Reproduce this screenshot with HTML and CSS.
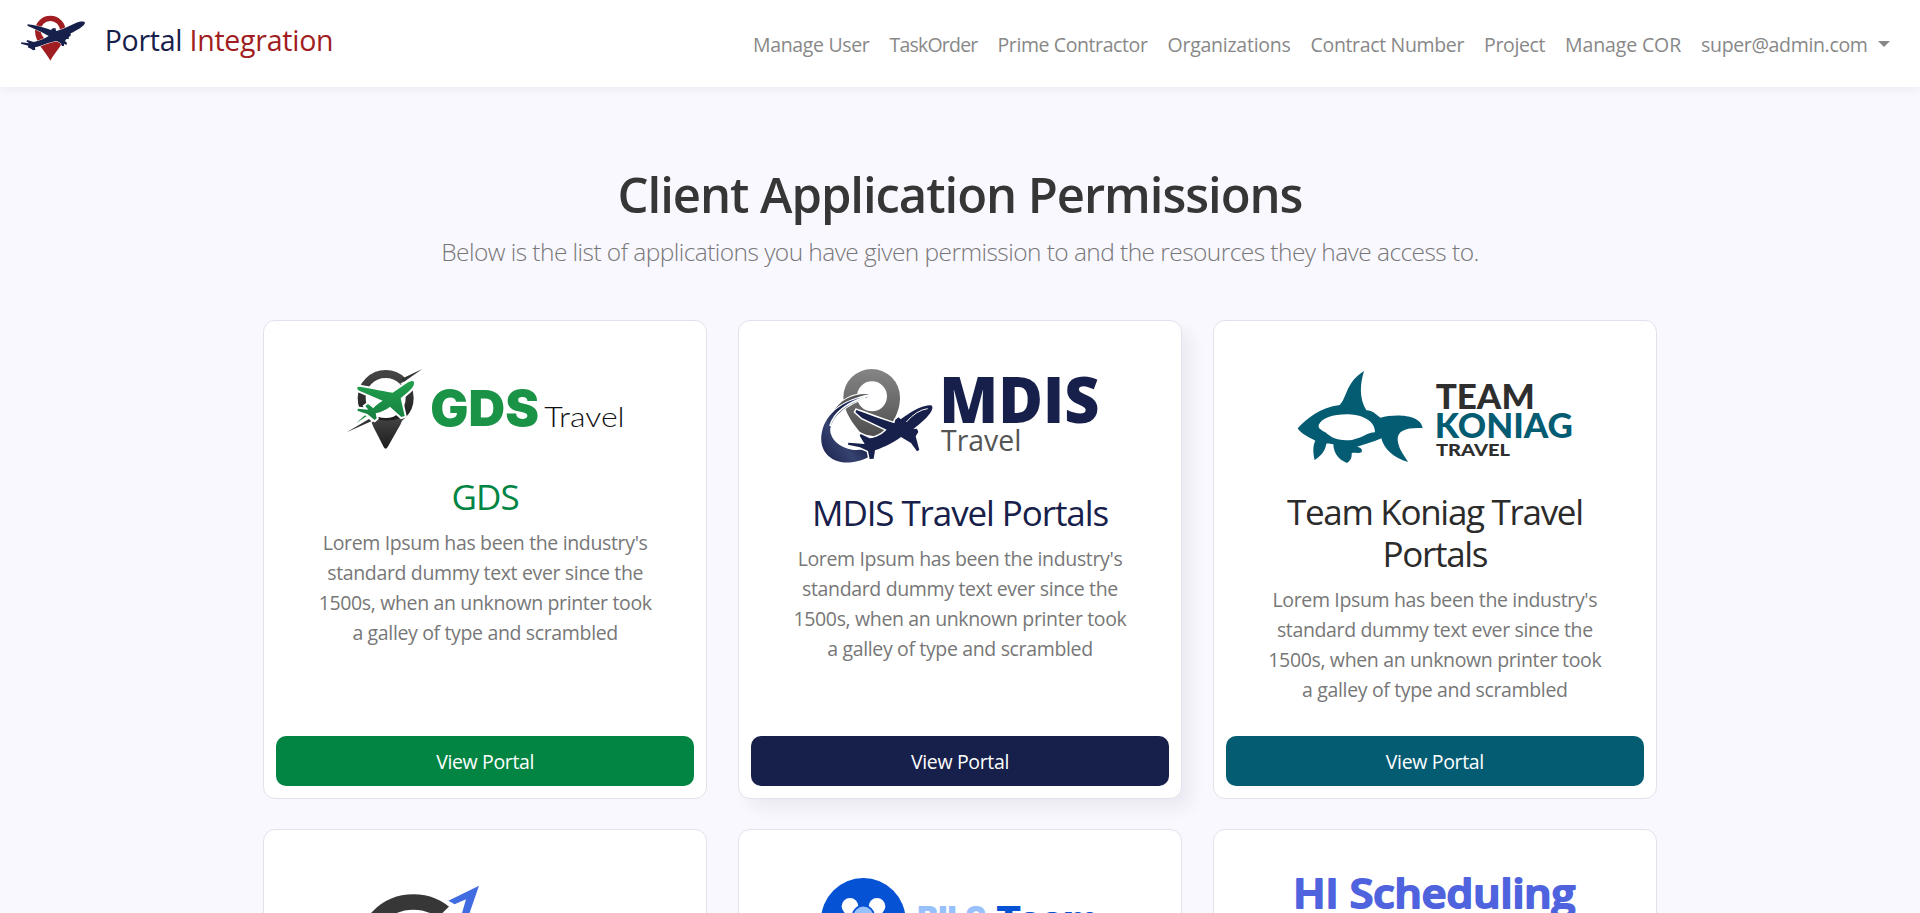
FILE: index.html
```html
<!DOCTYPE html>
<html lang="en">
<head>
<meta charset="utf-8">
<title>Portal Integration</title>
<link rel="stylesheet" href="styles.css">
</head>
<body>
<header class="navbar">
  <a class="brand">
    <svg class="brand-logo" viewBox="60 40 200 150">
      <path fill="#a01d21" fill-rule="evenodd" d="M151 183C140 160 105 130 105 94a46 46 0 0 1 92 0C197 130 162 160 151 183zM151 64a29 29 0 1 0 0 58a29 29 0 1 0 0-58z"/>
      <path fill="#17204a" stroke="#fff" stroke-width="3" paint-order="stroke" d="M255 69C253 63 240 65 229 69L190 87L177 92L168 94L167 86L158 86L153 91C130 83 103 76 83 74L82 78L124 97L146 109C133 118 116 124 101 127L82 121L79 125L87 131L64 128L63 132L85 138L83 143L93 147L99 152L106 150L105 143C124 140 146 126 171 124L181 130L186 139L192 139L192 132L199 136L201 130L195 124L198 119L207 117L206 112L212 108L212 101C231 91 253 80 255 69z"/>
    </svg>
    <span class="brand-name">Portal <span class="brand-accent">Integration</span></span>
  </a>
  <nav class="nav-links">
    <a class="nav-user">Manage User</a>
    <a class="nav-task">TaskOrder</a>
    <a class="nav-prime">Prime Contractor</a>
    <a class="nav-org">Organizations</a>
    <a class="nav-contract">Contract Number</a>
    <a class="nav-project">Project</a>
    <a class="nav-cor">Manage COR</a>
    <a class="nav-account">super@admin.com<span class="caret"></span></a>
  </nav>
</header>
<main>
  <h1 class="page-title">Client Application Permissions</h1>
  <p class="page-lead">Below is the list of applications you have given permission to and the resources they have access to.</p>
  <div class="cards">
    <article class="card card-gds">
      <div class="logo">
        <svg width="310" height="120" viewBox="0 0 930 360">
          <defs>
            <linearGradient id="ink" x1="0" y1="0" x2="0" y2="1"><stop offset="0" stop-color="#444"/><stop offset="1" stop-color="#1c1c1c"/></linearGradient>
            <linearGradient id="leaf" x1="0" y1="0" x2="0" y2="1"><stop offset="0" stop-color="#22a04d"/><stop offset="1" stop-color="#168040"/></linearGradient>
          </defs>
          <circle cx="167" cy="144" r="72" fill="none" stroke="url(#ink)" stroke-width="24"/>
          <path fill="url(#ink)" d="M118 201Q167 222 221 201L211 224L173 291Q167 301 161 291L130 230z"/>
          <path fill="#fff" d="M211 101L252 76L262 99L234 118zM72 192L110 190L137 211L110 226z"/>
          <path fill="#333" d="M277 57L212 88L222 95zM50 247L117 207L124 214z"/>
          <path fill="#1b8a44" d="M79 219L110 191L116 194z"/>
          <path fill="url(#leaf)" stroke="#fff" stroke-width="12" paint-order="stroke" d="M252 97C250 90 240 93 230 100L188 128C150 122 110 112 84 110C78 115 85 122 95 125L158 152C145 160 135 168 130 175L114 162L106 168L115 179L84 176L82 182L112 192L134 210L140 205L137 190C155 187 170 177 180 170L214 201L224 198L212 145C230 130 255 112 252 97z"/>
          <text class="gds-word" x="301" y="229" textLength="326" lengthAdjust="spacingAndGlyphs">GDS</text>
          <text class="gds-travel" x="643" y="230" textLength="241" lengthAdjust="spacingAndGlyphs">Travel</text>
        </svg>
      </div>
      <h2 class="card-title">GDS</h2>
      <p class="card-text">Lorem Ipsum has been the industry's standard dummy text ever since the 1500s, when an unknown printer took a galley of type and scrambled</p>
      <a class="btn">View Portal</a>
    </article>
    <article class="card card-mdis card-active">
      <div class="logo">
        <svg width="320" height="130" viewBox="0 0 960 390">
          <defs>
            <linearGradient id="steel" x1="0" y1="0" x2="0" y2="1"><stop offset="0" stop-color="#858585"/><stop offset="1" stop-color="#4d4d4d"/></linearGradient>
            <linearGradient id="swoosh" x1="0" y1="1" x2="1" y2="0"><stop offset="0" stop-color="#17204a"/><stop offset=".35" stop-color="#36426f"/><stop offset=".6" stop-color="#17204a"/><stop offset="1" stop-color="#3f64a8"/></linearGradient>
          </defs>
          <path fill="url(#steel)" fill-rule="evenodd" d="M130 142a85 85 0 0 1 170 0C300 195 272 217 258 265L185 252C160 222 132 190 130 142zM216 94a43 43 0 1 0 0 90a43 43 0 1 0 0-90z"/>
          <path fill="#555" stroke="#fff" stroke-width="5" paint-order="stroke" d="M208 132C160 129 120 148 99 187C128 157 165 142 208 132z"/>
          <path fill="url(#swoosh)" stroke="#fff" stroke-width="6" paint-order="stroke" d="M206 140C140 146 88 181 69 233C47 303 96 344 155 337C184 334 203 324 216 313L191 297C154 308 100 288 91 246C87 203 142 159 206 140z"/>
          <path fill="none" stroke="#fff" stroke-width="5" d="M196 142C143 157 100 188 90 228"/>
          <path fill="#17204a" stroke="#fff" stroke-width="9" paint-order="stroke" d="M396 167C374 159 325 190 302 208L296 202L286 209L283 220C242 208 205 192 169 180L166 186L186 204L260 239C248 252 230 262 209 265L182 252L179 257L194 282L145 278L144 284L180 292L204 303L209 327L221 326L225 301C257 290 285 274 303 261L333 279L351 304L358 300L347 259L355 246L351 236L337 237L333 242C350 229 406 188 396 167z"/>
          <path fill="none" stroke="#fff" stroke-width="3" d="M319 216Q350 180 383 176"/>
          <text class="mdis-word" x="418" y="218" textLength="480" lengthAdjust="spacingAndGlyphs">MDIS</text>
          <text class="mdis-travel" x="423" y="302" textLength="241" lengthAdjust="spacingAndGlyphs">Travel</text>
        </svg>
      </div>
      <h2 class="card-title">MDIS Travel Portals</h2>
      <p class="card-text">Lorem Ipsum has been the industry's standard dummy text ever since the 1500s, when an unknown printer took a galley of type and scrambled</p>
      <a class="btn">View Portal</a>
    </article>
    <article class="card card-koniag">
      <div class="logo">
        <svg width="320" height="130" viewBox="-16 0 960 390">
          <path fill="#045c73" fill-rule="evenodd" d="M52 235C80 205 120 172 178 165C200 144 196 97 251 63C240 100 235 142 258 181C275 180 285 192 300 203C340 192 420 190 427 234C380 232 350 240 352 270C355 300 375 320 383 336C340 325 310 295 303 265C280 275 255 283 230 290C240 292 247 296 244 306C235 312 222 306 214 310C215 325 208 335 200 339C175 330 160 310 159 283C150 282 145 280 138 281C135 305 118 320 103 330C97 305 98 285 105 272C85 262 60 250 52 235zM115 225C125 203 160 192 205 193C250 195 285 215 284 247C260 248 250 262 215 270C170 275 150 260 135 247C122 240 113 235 115 225z"/>
          <text class="koniag-word koniag-dark" x="466" y="178" textLength="297" lengthAdjust="spacingAndGlyphs">TEAM</text>
          <text class="koniag-word koniag-teal" x="463" y="264" textLength="415" lengthAdjust="spacingAndGlyphs">KONIAG</text>
          <text class="koniag-small koniag-dark" x="467" y="318" textLength="222" lengthAdjust="spacingAndGlyphs">TRAVEL</text>
        </svg>
      </div>
      <h2 class="card-title">Team Koniag Travel Portals</h2>
      <p class="card-text">Lorem Ipsum has been the industry's standard dummy text ever since the 1500s, when an unknown printer took a galley of type and scrambled</p>
      <a class="btn">View Portal</a>
    </article>
    <article class="card card-next">
      <div class="logo">
        <svg width="290" height="130" viewBox="0 0 870 390">
          <circle cx="220" cy="275" r="149" fill="none" stroke="#373737" stroke-width="46"/>
          <path fill="#fff" d="M335 132L300 166L400 240L400 110z"/>
          <path fill="#416be0" d="M325 122L417 77L378 190L360 180L378 118L344 133z"/>
        </svg>
      </div>
    </article>
    <article class="card card-next">
      <div class="logo">
        <svg width="320" height="130" viewBox="0 0 960 390">
          <circle cx="190" cy="181" r="127" fill="#0552d4"/>
          <circle cx="150" cy="139" r="25" fill="#fff"/>
          <circle cx="231" cy="139" r="25" fill="#fff"/>
          <circle cx="190" cy="169" r="32" fill="#97c0fd" stroke="#0552d4" stroke-width="5"/>
          <text class="bils" x="352" y="207" textLength="207" lengthAdjust="spacingAndGlyphs" fill="#97c0fd">BILS</text>
          <text class="bils" x="588" y="207" textLength="306" lengthAdjust="spacingAndGlyphs" fill="#0552d4">Team</text>
        </svg>
      </div>
    </article>
    <article class="card card-next">
      <div class="logo">
        <svg width="330" height="130" viewBox="0 0 990 390">
          <text class="scheduling" x="70" y="145" textLength="846" lengthAdjust="spacingAndGlyphs">HI Scheduling</text>
        </svg>
      </div>
    </article>
  </div>
</main>
</body>
</html>
```
FILE: styles.css
```css
* { box-sizing: border-box; }
html, body { height: 100%; }
body {
  margin: 0;
  overflow: hidden;
  background: #f9f8ff;
  color: #777;
  font-family: "Open Sans", "Noto Sans", sans-serif;
  font-size: 19.5px;
  line-height: 30px;
  letter-spacing: -0.35px;
}

/* Top bar */
.navbar {
  display: flex;
  justify-content: space-between;
  height: 87px;
  padding: 13px 30px 0 20px;
  background: #fff;
  box-shadow: 0 2px 10px rgba(20, 20, 60, 0.06);
}
.brand { display: flex; gap: 18px; }
.brand-logo { width: 66.7px; height: 50px; }
.brand-name {
  padding-top: 12px;
  color: #17204a;
  font-size: 28.5px;
  letter-spacing: -0.25px;
  white-space: nowrap;
}
.brand-accent { color: #a01d21; }
.nav-links {
  display: flex;
  gap: 20px;
  padding-top: 17px;
  color: #888;
  white-space: nowrap;
}
.nav-user { letter-spacing: -0.34px; }
.nav-task { letter-spacing: -0.79px; }
.nav-prime { letter-spacing: -0.4px; }
.nav-org { letter-spacing: -0.25px; }
.nav-contract { letter-spacing: -0.34px; }
.nav-project { letter-spacing: -0.37px; }
.nav-cor { letter-spacing: -0.13px; }
.nav-account { letter-spacing: -0.34px; }
.caret {
  display: inline-block;
  margin-left: 10.5px;
  border: 6px solid transparent;
  border-top-color: #888;
  border-bottom: 0;
  vertical-align: 5px;
}

/* Heading */
.page-title {
  margin: 76.5px 0 0;
  color: #363636;
  font-size: 49px;
  font-weight: 600;
  line-height: 60px;
  letter-spacing: -1.05px;
  text-align: center;
}
.page-lead {
  margin: 10.5px 0 50px;
  font-size: 24.5px;
  font-weight: 300;
  line-height: 36px;
  letter-spacing: -0.56px;
  text-align: center;
}

/* Cards */
.cards {
  display: grid;
  grid-template-columns: repeat(3, 1fr);
  grid-auto-rows: 479px;
  gap: 30px 30.5px;
  width: 1394px;
  margin: 0 auto;
}
.card {
  display: flex;
  flex-direction: column;
  padding: 29px 12px 12px;
  background: #fff;
  border: 1px solid #e2e1ec;
  border-radius: 12px;
  text-align: center;
}
.card-next { padding-top: 30px; }
.card-active { box-shadow: 10px 10px 15px rgba(30, 30, 50, 0.06); }
.logo { display: flex; justify-content: center; height: 141.5px; }
.card-gds .logo { height: 126px; }
.card-koniag .logo { height: 140.5px; }
.card-title {
  margin: 0 30px;
  font-size: 35px;
  font-weight: 400;
  line-height: 42px;
  letter-spacing: -1.1px;
}
.card-text { margin: 10px 38px 0; }
.btn {
  height: 50px;
  margin-top: auto;
  padding-top: 11px;
  border-radius: 10px;
  color: #fff;
}
.card-gds .card-title { color: #028543; letter-spacing: -0.9px; }
.card-gds .btn { background: #028543; }
.card-mdis .card-title { color: #17204a; }
.card-mdis .btn { background: #17204a; }
.card-koniag .card-title { color: #2b2b2b; letter-spacing: -1.3px; }
.card-koniag .btn { background: #045c73; }

/* Logo lettering */
.logo text { letter-spacing: 0; }
.gds-word { fill: #1b9347; font: 900 150px Inter, sans-serif; }
.gds-travel { fill: #111; font: 300 80px Lato, sans-serif; }
.mdis-word { fill: #17204a; font: 800 190px "Open Sans", sans-serif; }
.mdis-travel { fill: #555; font: 400 90px "Open Sans", sans-serif; }
.koniag-word { font: 900 103px Lato, sans-serif; }
.koniag-small { font: 900 53px Lato, sans-serif; }
.koniag-dark { fill: #2e2e2e; }
.koniag-teal { fill: #045c73; }
.bils { font: 900 95px Inter, sans-serif; }
.scheduling {
  fill: #4e63dd;
  stroke: #4e63dd;
  stroke-width: 6px;
  stroke-linejoin: round;
  font: 600 117px "Open Sans", sans-serif;
}
```
